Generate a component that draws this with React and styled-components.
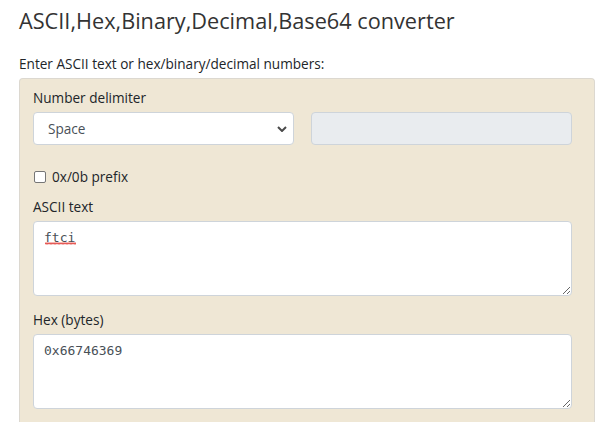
import React from 'react';
import styled, { createGlobalStyle } from 'styled-components';

const GlobalStyle = createGlobalStyle`
  * { box-sizing: border-box; }
  body {
    margin: 0;
    background: #fff;
    font-family: "Open Sans", "Noto Sans", sans-serif;
    color: #212529;
  }
`;

const chevron =
  "data:image/svg+xml;utf8," +
  encodeURIComponent(
    '<svg xmlns="http://www.w3.org/2000/svg" width="10" height="6" viewBox="0 0 10 6"><path d="M1 1l4 4 4-4" fill="none" stroke="#4a4a4a" stroke-width="2"/></svg>'
  );

const squiggle =
  "data:image/svg+xml;utf8," +
  encodeURIComponent(
    '<svg xmlns="http://www.w3.org/2000/svg" width="4" height="3" viewBox="0 0 4 3"><path d="M0 2.5L1 0.5L2 2.5L3 0.5L4 2.5" fill="none" stroke="#e0302a" stroke-width="0.8"/></svg>'
  );

const Page = styled.div`
  padding: 5px 10px 0 19px;
`;

const Title = styled.h1`
  margin: 0 0 16px;
  font-size: 21.7px;
  font-weight: 400;
  line-height: 32px;
  color: #333;
`;

const Intro = styled.p`
  margin: 0 0 4px;
  font-size: 13.6px;
  line-height: 21px;
  color: #212529;
`;

const Panel = styled.div`
  background: #efe7d5;
  border: 1px solid #dcd8d0;
  border-bottom: none;
  border-radius: 4px 4px 0 0;
  padding: 8px 22px 14px 13px;
`;

const Group = styled.div`
  position: relative;
  margin-bottom: ${(p) => p.gap || 13}px;
`;

const Label = styled.label`
  display: block;
  margin-bottom: 4px;
  font-size: 13.6px;
  line-height: 21px;
  color: #212529;
`;

const Row = styled.div`
  display: grid;
  grid-template-columns: 1fr 1fr;
  gap: 17px;
`;

const Field = styled.input`
  display: block;
  width: 100%;
  height: 33px;
  padding: 5px 10px;
  font: inherit;
  font-size: 13.6px;
  color: #495057;
  background: ${(p) => (p.disabled ? '#e9ecef' : '#fff')};
  border: 1px solid #ced4da;
  border-radius: 4px;
`;

const Select = styled.select`
  display: block;
  width: 100%;
  height: 33px;
  padding: 5px 30px 5px 14px;
  font-family: inherit;
  font-size: 13.6px;
  color: #495057;
  background: #fff url("${chevron}") no-repeat right 6px center;
  border: 1px solid #ced4da;
  border-radius: 4px;
  appearance: none;
  -webkit-appearance: none;
`;

const Check = styled.label`
  display: flex;
  align-items: center;
  gap: 6px;
  font-size: 13.6px;
  line-height: 21px;
  color: #212529;
`;

const Box = styled.input`
  appearance: none;
  -webkit-appearance: none;
  margin: 0 0 0 1px;
  width: 12px;
  height: 12px;
  border: 1px solid #767676;
  border-radius: 2px;
  background: #fff;
`;

const AreaWrap = styled.div`
  position: relative;
`;

const Area = styled.textarea`
  display: block;
  width: 100%;
  height: 75px;
  padding: 5px 10px;
  font-family: "DejaVu Sans Mono", monospace;
  font-size: 13px;
  line-height: 21px;
  color: #495057;
  background: #fff;
  border: 1px solid #ced4da;
  border-radius: 4px;
  resize: vertical;
`;

const Spell = styled.span`
  position: absolute;
  left: 12px;
  top: 21px;
  width: ${(p) => p.width}px;
  height: 3px;
  background: url("${squiggle}") repeat-x;
  pointer-events: none;
`;

export default function App() {
  return (
    <>
      <GlobalStyle />
      <Page>
        <Title>ASCII,Hex,Binary,Decimal,Base64 converter</Title>
        <Intro>Enter ASCII text or hex/binary/decimal numbers:</Intro>
        <Panel>
          <Group gap={21}>
            <Label>Number delimiter</Label>
            <Row>
              <Select defaultValue="space">
                <option value="space">Space</option>
                <option value="comma">Comma</option>
                <option value="none">None</option>
                <option value="user">User defined</option>
              </Select>
              <Field disabled />
            </Row>
          </Group>
          <Group gap={9}>
            <Check>
              <Box type="checkbox" />
              0x/0b prefix
            </Check>
          </Group>
          <Group>
            <Label>ASCII text</Label>
            <AreaWrap>
              <Area defaultValue="ftci" spellCheck={false} />
              <Spell width={31} />
            </AreaWrap>
          </Group>
          <Group>
            <Label>Hex (bytes)</Label>
            <AreaWrap>
              <Area defaultValue="0x66746369" spellCheck={false} />
            </AreaWrap>
          </Group>
        </Panel>
      </Page>
    </>
  );
}
